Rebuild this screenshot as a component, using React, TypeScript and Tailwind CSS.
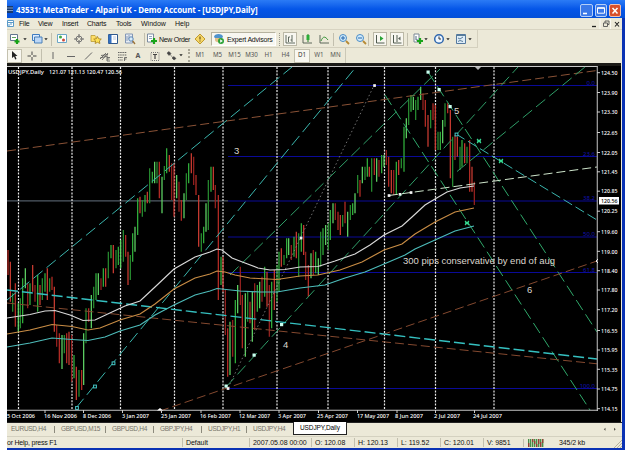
import React from "react";

type Segment = { ox: number; oy: number; bars: string };

// Bar ranges in thirds of a pixel: x, high, low, direction (g = up, r = down).
const segments: Segment[] = [
  {
    ox: 0,
    oy: 235,
    bars:
      "24 45 120 r,31 80 200 r,38 175 230 g,46 145 275 r,55 205 290 g,61 190 280 g,68 130 265 g,76 100 160 g,83 145 220 r,90 145 210 g,98 90 170 r,105 150 200 r,113 120 230 g,120 150 210 r,127 130 195 g,135 115 170 g,142 100 195 r,149 130 170 g,156 125 165 r,163 155 290 r,170 270 335 r,178 295 385 r,186 300 402 g,193 300 355 g,200 295 385 r,207 290 390 r,215 300 440 r,222 360 430 g,229 395 495 r,237 405 485 g,245 405 465 r,251 295 450 g,258 220 325 g,266 220 260 r,274 180 280 g,281 155 220 g,288 115 195 g,295 115 180 g,303 130 165 r,310 100 155 g,317 100 155 r,325 50 130 g,333 30 70 g,340 30 115 r,348 45 100 g,355 35 90 g,362 15 100 g,370 -15 80 g,377 0 65 r,384 50 150 r,391 60 135 g,398 -5 80 g,405 -25 50 g",
  },
  {
    ox: 0,
    oy: 60,
    bars:
      "413 415 525 g,420 410 460 r,427 420 470 g,435 405 455 g,442 395 430 r,449 325 430 g,457 335 370 g,464 305 370 g,471 305 370 g,478 305 415 r,486 350 460 g,493 318 360 g,500 265 340 g,508 285 335 r,515 310 420 r,522 310 470 r,530 345 415 g,537 365 455 r,544 420 482 r,552 400 475 g,559 340 420 g,566 310 370 g,574 280 340 r,581 290 375 r,588 345 405 r,596 405 560 r,604 520 575 g,611 500 550 g,618 430 515 g,625 360 510 g,633 320 395 g,640 320 390 r,646 375 445 r,655 405 720 r",
  },
  {
    ox: 205,
    oy: 235,
    bars:
      "48 65 150 g,54 65 170 r,61 165 300 r,68 280 425 r,75 260 420 g,83 255 365 r,91 195 385 g,98 150 235 g,106 95 210 r,112 180 340 r,121 175 365 g,128 170 260 g,135 200 265 r,142 170 320 g,149 145 285 r,157 150 230 g,164 140 220 g,171 125 200 r,179 95 185 g,186 110 215 r,193 150 305 r,200 140 280 g,208 105 225 r,216 90 200 g,222 50 170 g,229 40 95 r,237 60 90 g,245 10 70 g,251 10 60 g,259 30 75 r,267 5 65 g,274 -10 70 r,281 -5 125 g,289 -35 50 g,296 -30 60 r,302 50 135 r,310 90 185 r,318 55 130 g,325 45 120 r,332 50 115 g,340 70 120 g,347 -10 95 g,354 -20 60 g,362 -30 30 g,370 -35 45 g",
  },
  {
    ox: 205,
    oy: 60,
    bars:
      "376 450 540 g,384 430 490 g,391 430 480 r,399 455 510 r,406 465 525 r,413 465 500 g,420 425 490 r,428 455 530 g,436 435 480 g,443 430 465 g,450 400 460 g,458 345 400 g,465 360 410 r,472 320 370 g,480 320 360 g,487 295 350 g,493 320 350 r,500 295 395 g,508 295 345 r,515 295 365 g,522 300 350 r,530 285 340 g,537 285 320 g,544 270 315 r,551 290 380 r,559 330 400 r,566 330 405 r,574 305 405 g,581 300 345 r,589 295 325 g,597 200 335 g,604 175 235 g,611 115 195 g",
  },
  {
    ox: 410,
    oy: 60,
    bars:
      "3 105 155 g,10 110 150 g,17 120 180 g,24 110 150 g,32 80 120 g,39 100 150 r,46 120 200 r,54 165 260 r,62 150 205 g,69 130 180 r,76 135 270 r,84 215 270 g,91 215 270 g,98 180 250 g,105 130 200 g,113 130 160 r,121 150 355 r,128 230 380 g,135 225 300 r,142 230 290 r,150 260 330 g,156 240 320 g,164 250 310 r,171 260 310 g,179 240 395 r,186 320 395 r,193 365 435 r",
  },
];

const greens = ["#31b13c", "#5fd565", "#278d30"];
const reds = ["#b82c26", "#cc3c32", "#982220"];

const bars = segments.flatMap((s) =>
  s.bars.split(",").map((entry, i) => {
    const [x, a, b, d] = entry.split(" ");
    return {
      x: s.ox + Number(x) / 3,
      y1: s.oy + Number(a) / 3,
      y2: s.oy + Number(b) / 3,
      color: d === "g" ? greens[i % 3] : reds[i % 3],
    };
  })
);

const months = [18.5, 72, 120.5, 174.5, 223, 277, 328, 384.5, 435.5, 494];

const fibs: [number, string][] = [
  [85.5, "0.0"],
  [156.5, "23.6"],
  [201, "38.2"],
  [237, "50.0"],
  [272.5, "61.8"],
  [388.5, "100.0"],
];

const prices: [number, string][] = [
  [72.7, "124.50"],
  [92.5, "123.90"],
  [112, "123.30"],
  [132.5, "122.65"],
  [152.5, "122.05"],
  [171.8, "121.45"],
  [191.2, "120.85"],
  [211.2, "120.25"],
  [231.7, "119.60"],
  [251.3, "119.00"],
  [270.7, "118.40"],
  [290, "117.80"],
  [309.7, "117.20"],
  [330.5, "116.55"],
  [350, "115.95"],
  [369.3, "115.35"],
  [389, "114.75"],
  [408.7, "114.15"],
];

const dates: [number, number, string][] = [
  [7, 28, "5 Oct 2006"],
  [44, 33, "16 Nov 2006"],
  [83, 28, "8 Dec 2006"],
  [122, 27, "3 Jan 2007"],
  [161, 30, "25 Jan 2007"],
  [200, 31, "16 Feb 2007"],
  [239, 31, "12 Mar 2007"],
  [278, 28, "3 Apr 2007"],
  [317, 31, "25 Apr 2007"],
  [357, 32, "17 May 2007"],
  [395, 28, "8 Jun 2007"],
  [434, 26, "2 Jul 2007"],
  [473, 29, "24 Jul 2007"],
];

// x1, y1, x2, y2, colour, dash pattern
const trends: [number, number, number, number, string, string][] = [
  [7, 151, 597, 70.5, "#8a5236", "9 4"],
  [7, 300, 292, 67, "#3ab5ad", "12 5"],
  [76, 408, 356, 67, "#3ab5ad", "12 5"],
  [230, 275, 440, 69, "#2f9e68", "12 5"],
  [226, 387, 518, 67, "#2f9e68", "12 5"],
  [457, 171.5, 585, 67, "#2f9e68", "12 5"],
  [428, 72, 597, 332, "#2fa86a", "12 5"],
  [385, 95, 590, 410, "#2fa86a", "12 5"],
  [456, 134, 597, 220, "#3ab5ad", "10 4"],
  [389, 195.5, 597, 167, "#cfe6cc", "9 4"],
  [7, 303, 597, 363.8, "#84492f", "9 4"],
  [160, 411, 597, 261, "#84492f", "9 4"],
];

const white =
  "7,318 30,314.5 45,311 55,310.5 70,315 83,320.5 95,320 112,312 125,306 140,301 155,287 174,269 195,257 210,252 217,249 222,250 232,258 245,263 258,268 270,270 285,269.5 300,267 318,266.5 335,261 355,254 370,245 384,235 402,226 412,217 425,205 435,199 447,192 460,188 474,186";
const orange =
  "7,334 30,330 52,324.5 72,326.5 88,330 100,328 120,320 140,314 155,304 174,289 195,278 210,274 217,271 225,272 235,275 250,278 277,279.5 300,276 318,275 340,270 362,262 384,250 402,244 415,234 435,222 455,212 474,208";
const aqua =
  "7,347 30,343 52,338 72,339.5 88,340.5 105,337 120,331 140,325 155,315 174,305 195,295 210,291 217,288.5 240,291 260,292 277,292 300,288 325,285 345,278 365,272 384,264 405,255 415,249 435,240 455,231 474,226";

function Chart() {
  return (
    <svg
      className="block shrink-0 bg-black"
      width="614"
      height="359"
      viewBox="7 63 614 359"
      fontFamily="'Noto Sans', sans-serif"
    >
      <rect x="7" y="63" width="614" height="3" fill="#1b1a17" />
      <rect x="7" y="66" width="591" height="1" fill="#c9c9c9" />
      <path d="M7 200.9H228" stroke="#515b66" strokeWidth="1.1" />
      {fibs.map(([y, label]) => (
        <g key={label}>
          <path d={`M228 ${y}H597`} stroke="#0a0a98" strokeWidth="1.2" />
          <text x="595" y={y - 1} fontSize="6" textAnchor="end" fill="#1212b4">
            {label}
          </text>
        </g>
      ))}
      {months.map((x) => (
        <path key={x} d={`M${x} 67V410`} stroke="#e8e8e8" strokeWidth="1.2" strokeDasharray="2 1.3" />
      ))}
      {bars.map((b, i) => (
        <path key={i} d={`M${b.x} ${b.y1}V${b.y2}`} stroke={b.color} strokeWidth="1.25" />
      ))}
      {trends.map(([x1, y1, x2, y2, c, dash], i) => (
        <path key={i} d={`M${x1} ${y1}L${x2} ${y2}`} stroke={c} strokeWidth="1" strokeDasharray={dash} />
      ))}
      <path d="M7 290L597 359" stroke="#35c0c0" strokeWidth="1.4" strokeDasharray="11 4" />
      <path d="M228 388L374 85.5" stroke="#8d8d8d" strokeWidth="0.8" strokeDasharray="1.5 2.5" />
      <g fill="none" strokeWidth="1.15">
        <polyline points={white} stroke="#d8d8d8" />
        <polyline points={orange} stroke="#c98d45" />
        <polyline points={aqua} stroke="#4dbcba" />
      </g>

      <g fill="#c8fff0">
        {[
          [428, 72],
          [439, 89.5],
          [450, 106.5],
          [226, 386],
          [254, 355],
          [281.5, 324.5],
        ].map(([x, y]) => (
          <rect key={x} x={x - 1.5} y={y - 1.5} width="3.2" height="3.2" />
        ))}
      </g>
      <g fill="#f4f4f4">
        {[
          [389, 195.5],
          [400, 194.3],
          [411, 192.5],
          [374.5, 85.5],
          [228, 388.5],
          [301, 238],
        ].map(([x, y]) => (
          <rect key={x} x={x - 1.3} y={y - 1.3} width="2.7" height="2.7" />
        ))}
      </g>
      <g fill="#000" stroke="#45c8c8" strokeWidth="1">
        {[
          [77, 408],
          [95, 386.5],
          [113.5, 363.3],
          [456.5, 134.5],
        ].map(([x, y]) => (
          <rect key={x} x={x - 1.4} y={y - 1.4} width="2.8" height="2.8" />
        ))}
      </g>
      <g stroke="#35d890" strokeWidth="1.1">
        {[
          [467, 223],
          [479, 141],
          [501, 161],
        ].map(([x, y]) => (
          <path key={x} d={`M${x - 2} ${y - 2}l4 4m0 -4l-4 4M${x - 2} ${y}h4`} />
        ))}
      </g>

      <path d="M597.3 66V411" stroke="#a5a5a5" strokeWidth="1.2" />
      <path d="M7 410.3H598" stroke="#c4c4c4" strokeWidth="1.1" />
      <path d="M475 67h6l-3 3z" fill="#b8b8b8" />
      <path d="M157 410.5l3 -2.5l3 2.5z" fill="#fff" />
      <path d="M598 259l-2 2l2 2" stroke="#fff" fill="none" strokeWidth=".9" />
      {[45, 83.5, 122.5, 161.5, 201, 240, 279, 318.5, 357.5, 397, 435.5, 474.5].map((x) => (
        <path key={x} d={`M${x} 410V413`} stroke="#ccc" strokeWidth="1" />
      ))}
      {prices.map(([y, p]) => (
        <g key={p}>
          <path d={`M597 ${y}h3`} stroke="#ccc" strokeWidth="1" />
          <text
            x="601"
            y={y + 2.2}
            fontSize="6"
            fontWeight="500"
            textLength="16.5"
            lengthAdjust="spacingAndGlyphs"
            fill="#fff"
          >
            {p}
          </text>
        </g>
      ))}
      <rect x="599" y="197" width="20" height="7.5" fill="#fff" />
      <text x="601" y="203" fontSize="6" fontWeight="500" textLength="16.5" lengthAdjust="spacingAndGlyphs" fill="#000">
        120.56
      </text>
      {dates.map(([x, w, d]) => (
        <text
          key={d}
          x={x}
          y="418"
          fontSize="6"
          fontWeight="500"
          textLength={w}
          lengthAdjust="spacingAndGlyphs"
          fill="#fff"
        >
          {d}
        </text>
      ))}
      <text x="8" y="73.5" fontSize="6" fontWeight="500" textLength="36" lengthAdjust="spacingAndGlyphs" fill="#fff">
        USDJPY,Daily
      </text>
      <text x="49" y="73.5" fontSize="6" fontWeight="500" textLength="73" lengthAdjust="spacingAndGlyphs" fill="#fff">
        121.07 121.13 120.47 120.56
      </text>
      <g fontFamily="'Liberation Sans', sans-serif" fontSize="9.5" fill="#dcd6ce">
        <text x="234" y="154">3</text>
        <text x="283" y="348">4</text>
        <text x="454" y="113.5">5</text>
        <text x="527" y="292.5">6</text>
        <text x="403" y="264" fontSize="9.3" textLength="152" lengthAdjust="spacingAndGlyphs">
          300 pips conservative by end of aug
        </text>
      </g>
    </svg>
  );
}

function Icon({ w = 12, ml, children }: { w?: number; ml: string; children: React.ReactNode }) {
  return (
    <svg className={`shrink-0 ${ml}`} width={w} height="12" viewBox={`0 0 ${w} 12`} fill="none">
      {children}
    </svg>
  );
}

function Drop({ ml = "ml-px" }: { ml?: string }) {
  return (
    <svg className={`shrink-0 ${ml}`} width="4" height="3" viewBox="0 0 4 3">
      <path d="M.3 .3h3.4L2 2.2z" fill="#222" />
    </svg>
  );
}

function Sep({ ml }: { ml: string }) {
  return <div className={`h-[13px] w-px shrink-0 bg-[#c2bfae] ${ml}`} />;
}

function TitleBar() {
  return (
    <header className="flex h-[18px] shrink-0 items-center bg-linear-to-b from-[#2b7bf5] via-[#0556e8] to-[#0450d8] pr-1">
      <svg className="mt-[2px] shrink-0" width="7" height="8" viewBox="0 0 7 8">
        <path d="M0 0h6v7H0z" fill="#183a70" />
        <path d="M0 2h6M0 4.5h6" stroke="#9cb8d8" strokeWidth=".8" />
      </svg>
      <h1 className="ml-[2px] mt-[2px] flex-1 whitespace-nowrap font-['Noto_Sans',sans-serif] text-[8px] font-bold leading-none tracking-[-0.06px] text-white">
        43531: MetaTrader - Alpari UK - Demo Account - [USDJPY,Daily]
      </h1>
      <div className="mt-[2px] flex gap-[2px]">
        <svg width="13" height="13" viewBox="0 0 13 13">
          <rect x=".5" y=".5" width="12" height="12" rx="1.5" fill="#3a78e8" stroke="#b5cff8" />
          <path d="M3 9.5h4" stroke="#fff" strokeWidth="1.6" />
        </svg>
        <svg width="12" height="13" viewBox="0 0 12 13">
          <rect x=".5" y=".5" width="11" height="12" rx="1.5" fill="#3a78e8" stroke="#b5cff8" />
          <path d="M2.500 3.7h7v5.500h-7zM2.500 4.3h7" stroke="#fff" fill="none" />
        </svg>
        <svg width="12" height="13" viewBox="0 0 12 13">
          <rect x=".5" y=".5" width="11" height="12" rx="1.5" fill="#d8502c" stroke="#f0c0b0" />
          <path d="M3.5 4l5 5.5m0 -5.5l-5 5.5" stroke="#fff" strokeWidth="1.5" />
        </svg>
      </div>
    </header>
  );
}

function MenuBar() {
  return (
    <nav className="flex h-[12px] shrink-0 items-center border-b border-[#d8d4c2] text-[7px] leading-none text-[#111]">
      <svg className="shrink-0" width="8" height="9" viewBox="0 0 8 9">
        <path d="M.5 1.5h6v6h-6z" fill="#fff" stroke="#5b9ac8" />
        <path d="M0 3.5h7M2 5v2m2 -3v2" stroke="#5b9ac8" />
      </svg>
      <span className="ml-1 w-[19px] tracking-[-0.2px]">File</span>
      <span className="w-6 tracking-[-0.2px]">View</span>
      <span className="w-[25px] tracking-[-0.2px]">Insert</span>
      <span className="w-[29px] tracking-[-0.2px]">Charts</span>
      <span className="w-[25px] tracking-[-0.2px]">Tools</span>
      <span className="w-[34px]">Window</span>
      <span className="flex-1">Help</span>
      <svg className="mr-[1px] shrink-0" width="31" height="10" viewBox="0 0 31 10" fill="none">
        <path d="M2 7.5h4" stroke="#222" strokeWidth="1.3" />
        <path d="M10 0v10M20.5 0v10" stroke="#fbfaf4" />
        <path d="M13.5 4h4v3.5h-4zM15 4V2h4v3.5h-1.5" stroke="#555" strokeWidth=".9" />
        <path d="M25 3l4 4.5m0 -4.5l-4 4.5" stroke="#222" strokeWidth="1.1" />
      </svg>
    </nav>
  );
}

const plus = "M8 6v5M5.5 8.500h5";

function MainToolbar() {
  return (
    <div className="flex h-[18px] w-[471px] shrink-0 items-center border-b border-r border-[#d4d0be] pt-px text-[7px] leading-none text-[#111]">
      <Icon ml="ml-[2px]" w={13}>
        <path d="M1.500 1.500h7v6h-7z" fill="#fff" stroke="#62758e" />
        <path d="M3 4.500h4" stroke="#62a060" />
        <path d={plus} stroke="#16a316" strokeWidth="2.2" />
      </Icon>
      <Drop />
      <Icon ml="ml-[4px]" w={12}>
        <path d="M1.5 1.5h7v6h-7z" fill="#ddecff" stroke="#3f7cc0" />
        <path d="M3.5 4h7.5v6H3.5z" fill="#bcd7f7" stroke="#4a80b8" />
      </Icon>
      <Drop />
      <Sep ml="ml-[3px]" />
      <Icon ml="ml-[4px]">
        <path d="M1.5 1.5h9v8h-9z" fill="#fff" stroke="#6ba6c6" />
        <circle cx="4.5" cy="4" r="1.5" fill="#43a843" />
        <circle cx="7.5" cy="7" r="1.5" fill="#cc4b38" />
      </Icon>
      <Icon ml="ml-[5px]">
        <circle cx="6" cy="6" r="3" stroke="#777" />
        <path d="M6 1v4M6 7v4M1 6h4M7 6h4" stroke="#666" />
      </Icon>
      <Icon ml="ml-[5px]">
        <path d="M1 2.5h4l1 1v5H1z" fill="#ffdf66" stroke="#b99a36" strokeWidth=".8" />
        <path
          d="M7.5 3.5l1.2 2.3 2.6.3-1.9 1.8.5 2.6-2.4-1.2-2.4 1.2.5-2.6-1.9-1.8 2.6-.3z"
          fill="#ffe254"
          stroke="#a8821c"
          strokeWidth=".8"
        />
      </Icon>
      <Icon ml="ml-[5px]">
        <path d="M1.5 1.5h9v9h-9z" fill="#fff" stroke="#30598e" />
        <path d="M1.5 2h3v8h-3z" fill="#3470c0" />
        <path d="M6 4h3M6 6h3" stroke="#bcc9dd" />
      </Icon>
      <Icon ml="ml-[5px]">
        <path d="M1.5 1h7v9h-7z" fill="#e7edf5" stroke="#8397b5" />
        <path d="M3 3v5M5 2v4M7 4v3" stroke="#7285a6" strokeWidth=".8" />
        <circle cx="7" cy="6" r="2.2" fill="#d7ecfa" stroke="#5d86b4" />
        <path d="M8.7 8l2.3 3" stroke="#9a7238" strokeWidth="1.3" />
      </Icon>
      <Sep ml="ml-[8px]" />
      <Icon ml="ml-[1px]" w={12}>
        <path d="M1.5 1h6v8h-6z" fill="#fff" stroke="#7b8ba0" />
        <path d="M3 3.5h3M3 5.5h3" stroke="#8ea4c0" />
        <path d="M8 5v6M5 8h6" stroke="#19a419" strokeWidth="2.2" />
      </Icon>
      <span className="w-[36px] whitespace-nowrap pl-[1px] tracking-[-0.3px]">New Order</span>
      <Icon ml="ml-0">
        <path d="M6 1l5 5-5 5-5-5z" fill="#f6d768" stroke="#c09a2f" />
        <path d="M6 3.5v3M6 7.5v1" stroke="#6c561c" strokeWidth="1.2" />
      </Icon>
      <div className="ml-[5px] flex h-[14px] w-[65px] shrink-0 items-center border border-[#b5b29f] border-b-white border-r-white bg-[#f8f7f0]">
        <svg className="ml-px shrink-0" width="12" height="12" viewBox="0 0 12 12">
          <path d="M1 4c0-4 9-4 9 0L9 5H2z" fill="#4f93cc" />
          <path d="M2 5h7v2c0 3-7 3-7 0z" fill="#e0be88" />
          <circle cx="8" cy="8" r="3" fill="#2ca338" />
          <path d="M7.2 6.3v3.4l2.6-1.7z" fill="#fff" />
        </svg>
        <span className="ml-[2px] whitespace-nowrap tracking-[-0.2px]">Expert Advisors</span>
      </div>
      <div className="ml-[3px] h-[13px] w-[2px] shrink-0 border-l border-dotted border-[#98968a]" />
      <div className="ml-[2px] flex h-[14px] w-[14px] shrink-0 items-center border border-[#bbb8a6] bg-[#f8f7f0]">
        <Icon ml="ml-0">
          <path d="M2 2v8h9M4.5 4v5M4.5 4h1.5M8 2v7M6.5 7H8" stroke="#4f5a4f" strokeWidth=".9" />
        </Icon>
      </div>
      <Icon ml="ml-[4px]">
        <path d="M2 2v8h9" stroke="#4f5a4f" strokeWidth=".9" />
        <path d="M7 1v8" stroke="#267d26" />
        <path d="M5.5 2h3v5h-3z" fill="#2dae39" />
      </Icon>
      <Icon ml="ml-[5px]">
        <path d="M2 2v8h9" stroke="#4f5a4f" strokeWidth=".9" />
        <path d="M3 8c2-5 4-5 7-1" stroke="#3c953c" />
      </Icon>
      <Sep ml="ml-[3px]" />
      <Icon ml="ml-[4px]">
        <circle cx="5" cy="5" r="3.5" fill="#d2ebfb" stroke="#4a8cc5" />
        <path d="M3 5h4M5 3v4" stroke="#2467ac" />
        <path d="M8 8l3 3" stroke="#b68a35" strokeWidth="1.8" />
      </Icon>
      <Icon ml="ml-[5px]">
        <circle cx="5" cy="5" r="3.5" fill="#d2ebfb" stroke="#4a8cc5" />
        <path d="M3 5h4" stroke="#2467ac" />
        <path d="M8 8l3 3" stroke="#b68a35" strokeWidth="1.8" />
      </Icon>
      <Sep ml="ml-[1px]" />
      <div className="ml-[4px] flex h-[14px] w-[14px] shrink-0 items-center border border-[#bbb8a6] bg-[#f8f7f0]">
        <Icon ml="ml-0">
          <path d="M2.5 2v8h8" stroke="#4f5a4f" />
          <path d="M6 3v5l3.5-2.5z" fill="#27a335" />
        </Icon>
      </div>
      <div className="ml-[3px] flex h-[14px] w-[14px] shrink-0 items-center border border-[#bbb8a6] bg-[#f8f7f0]">
        <Icon ml="ml-0">
          <path d="M2.5 2v8h8M6 2v7" stroke="#4f5a4f" />
          <path d="M9.5 3.5v4L7 5.5z" fill="#5c645c" />
        </Icon>
      </div>
      <Sep ml="ml-[3px]" />
      <Icon ml="ml-[4px]" w={12}>
        <path d="M2 1h5v8H2z" fill="#fff" stroke="#7b8794" />
        <path d="M4 3v4h2" stroke="#4c6780" />
        <path d="M8 5v6M5 8h6" stroke="#19a419" strokeWidth="2.2" />
      </Icon>
      <Drop ml="ml-0" />
      <Icon ml="ml-[5px]" w={12}>
        <circle cx="6" cy="6" r="4.3" fill="#edf6ff" stroke="#2f67ad" strokeWidth="1.5" />
        <path d="M6 3.5V6h2" stroke="#333" />
      </Icon>
      <Drop ml="ml-px" />
      <Icon ml="ml-[5px]" w={12}>
        <path d="M1.5 1.5h9v9h-9z" fill="#dfedf8" stroke="#54789e" />
        <path d="M1 2.5h10M3 5l2 1 3-2M3 8.5l2-1 3 1" stroke="#587d9a" />
      </Icon>
      <Drop ml="ml-px" />
    </div>
  );
}

const frames = ["M5", "M15", "M30", "H1", "H4"];

function LineToolbar() {
  return (
    <div className="flex h-[15px] w-[339px] shrink-0 items-center border-r border-[#cbc8b7] font-['Noto_Sans',sans-serif] text-[6.2px] leading-none text-[#555]">
      <div className="flex h-[14px] w-[15px] shrink-0 items-center justify-center border border-[#c4c1af] bg-[#f8f7f0]">
        <svg width="7" height="9" viewBox="0 0 7 9">
          <path d="M1 0v7l2-1.5L4.2 8.5 5.5 8 4.3 5H6.5z" fill="#222" />
        </svg>
      </div>
      <Icon ml="ml-[4px]">
        <path d="M6 1.5v3.5M6 7v3.5M1.5 6H5M7 6h3.5" stroke="#444" />
      </Icon>
      <Sep ml="ml-[3px]" />
      <Icon ml="ml-[5px]">
        <path d="M6 2v7" stroke="#666" />
      </Icon>
      <Icon ml="ml-[6px]">
        <path d="M2 6.5h8" stroke="#666" />
      </Icon>
      <Icon ml="ml-[5px]">
        <path d="M3 9.5l7-7" stroke="#666" />
      </Icon>
      <Icon ml="ml-[5px]">
        <path d="M1 9l6-6M3 10l6-7M2 5.5l7-1M1 8l8-2M8 7.5h3M8 9h2.5M8 7v4h3" stroke="#555" strokeWidth=".8" />
      </Icon>
      <Icon ml="ml-[5px]">
        <path d="M2 2.5h9M2 5h9M2 7.5h5M2 10h5" stroke="#555" strokeWidth=".9" strokeDasharray="1.5 .7" />
        <path d="M8.5 11V7.5h2.5M8.5 9h2" stroke="#555" strokeWidth=".8" />
      </Icon>
      <span className="ml-[4px] w-3 text-center text-[7px] font-bold">A</span>
      <Icon ml="ml-[5px]">
        <path d="M2 2.5h8v8H2z" stroke="#777" strokeDasharray="1 1" />
        <path d="M4 4.5h4M6 4.5v4.5" stroke="#444" strokeWidth="1.2" />
      </Icon>
      <Icon ml="ml-[5px]">
        <path
          d="M1 3l2-1.500L5 3.500 3 5.500zM3 3l4 5M6 8l2-1.500 2 2-2 1.500z"
          fill="#444"
          stroke="#444"
          strokeWidth=".5"
        />
      </Icon>
      <Drop ml="ml-px" />
      <div className="ml-[5px] h-[13px] w-[3px] shrink-0 border-l-2 border-dotted border-[#aaa797]" />
      <span className="w-[18px] text-center">M1</span>
      {frames.map((f) => (
        <span key={f} className="w-[17px] text-center">
          {f}
        </span>
      ))}
      <span className="flex h-[14px] w-[16px] items-center justify-center border border-[#c4c1af] bg-[#f8f7f0] text-[#333]">
        D1
      </span>
      <span className="w-[18px] text-center">W1</span>
      <span className="w-[15px] text-center">MN</span>
    </div>
  );
}

const tabs: [string, string][] = [
  ["EURUSD,H4", "w-[48px]"],
  ["GBPUSD,M15", "w-[51px]"],
  ["GBPUSD,H4", "w-[48px]"],
  ["GBPJPY,H4", "w-[48px]"],
  ["USDJPY,H1", "w-[45px]"],
];

function ChartTabs() {
  return (
    <div className="flex h-[14px] shrink-0 items-center border-t border-[#222] text-[6.5px] leading-none text-[#77756a]">
      {tabs.map(([t, w], i) => (
        <span
          key={t}
          className={`${w} whitespace-nowrap border-r border-[#8c8a7c] tracking-[-0.28px] ${i === 0 ? "pl-1" : "pl-[6px]"}`}
        >
          {t}
        </span>
      ))}
      <span className="w-[46px] whitespace-nowrap pl-[6px] tracking-[-0.28px]">USDJPY,H4</span>
      <span className="-mt-[2px] flex h-[13px] w-[54px] items-center whitespace-nowrap border-x border-b border-[#222] bg-white pl-[6px] pt-px tracking-[-0.1px] text-black">
        USDJPY,Daily
      </span>
      <svg className="ml-auto mr-1" width="16" height="5" viewBox="0 0 16 5">
        <path d="M3.500 .8v3L1.800 2.300zM12 .8v3l1.800-1.500z" fill="#55534a" />
      </svg>
    </div>
  );
}

const cells: [string, string][] = [
  ["Default", "w-[67px]"],
  ["2007.05.08 00:00", "w-[62px]"],
  ["O: 120.08", "w-[43px]"],
  ["H: 120.13", "w-[43px]"],
  ["L: 119.52", "w-[43px]"],
  ["C: 120.01", "w-[43px]"],
  ["V: 9851", "w-[40px]"],
];

function StatusBar() {
  return (
    <footer className="flex h-[12px] shrink-0 items-center border-t border-[#d4d1c0] text-[7px] leading-none text-[#111]">
      <span className="w-[175px] whitespace-nowrap tracking-[-0.22px]">or Help, press F1</span>
      {cells.map(([t, w]) => (
        <span key={t} className={`${w} whitespace-nowrap border-l border-[#c2bfae] py-px pl-[3px] tracking-[-0.05px]`}>
          {t}
        </span>
      ))}
      <div className="flex items-center border-l border-[#c2bfae] pl-[4px]">
        <svg width="16" height="8" viewBox="0 0 16 8">
          <path
            d="M.7 0v8M2.7 0v8M4.7 0v8M6.7 0v8M8.7 0v8M10.7 0v8M12.7 0v8M14.7 0v8"
            stroke="#3d8a42"
            strokeWidth="1.3"
          />
          <path
            d="M.7 4v4M4.7 0v3M6.7 2v3M8.7 5v3M10.7 0v5M12.7 3v5M14.7 0v4"
            stroke="#9c3c36"
            strokeWidth="1.3"
          />
        </svg>
        <span className="ml-[15px] whitespace-nowrap tracking-[-0.1px]">345/2 kb</span>
      </div>
      <svg className="ml-auto self-end" width="8" height="8" viewBox="0 0 8 8">
        <path d="M0 8l8-8M3 8l5-5M6 8l2-2" stroke="#b5b19e" />
      </svg>
    </footer>
  );
}

export default function App() {
  return (
    <div className="flex h-[450px] w-[625px] overflow-hidden bg-white pl-[7px]">
      <main className="flex w-[618px] flex-col bg-[#0a32b4] font-['Liberation_Sans',Arial,sans-serif]">
        <TitleBar />
        <div className="flex h-[430px] w-[615px] flex-col bg-[#ece9d8]">
          <MenuBar />
          <MainToolbar />
          <LineToolbar />
          <Chart />
          <ChartTabs />
          <StatusBar />
        </div>
      </main>
    </div>
  );
}
